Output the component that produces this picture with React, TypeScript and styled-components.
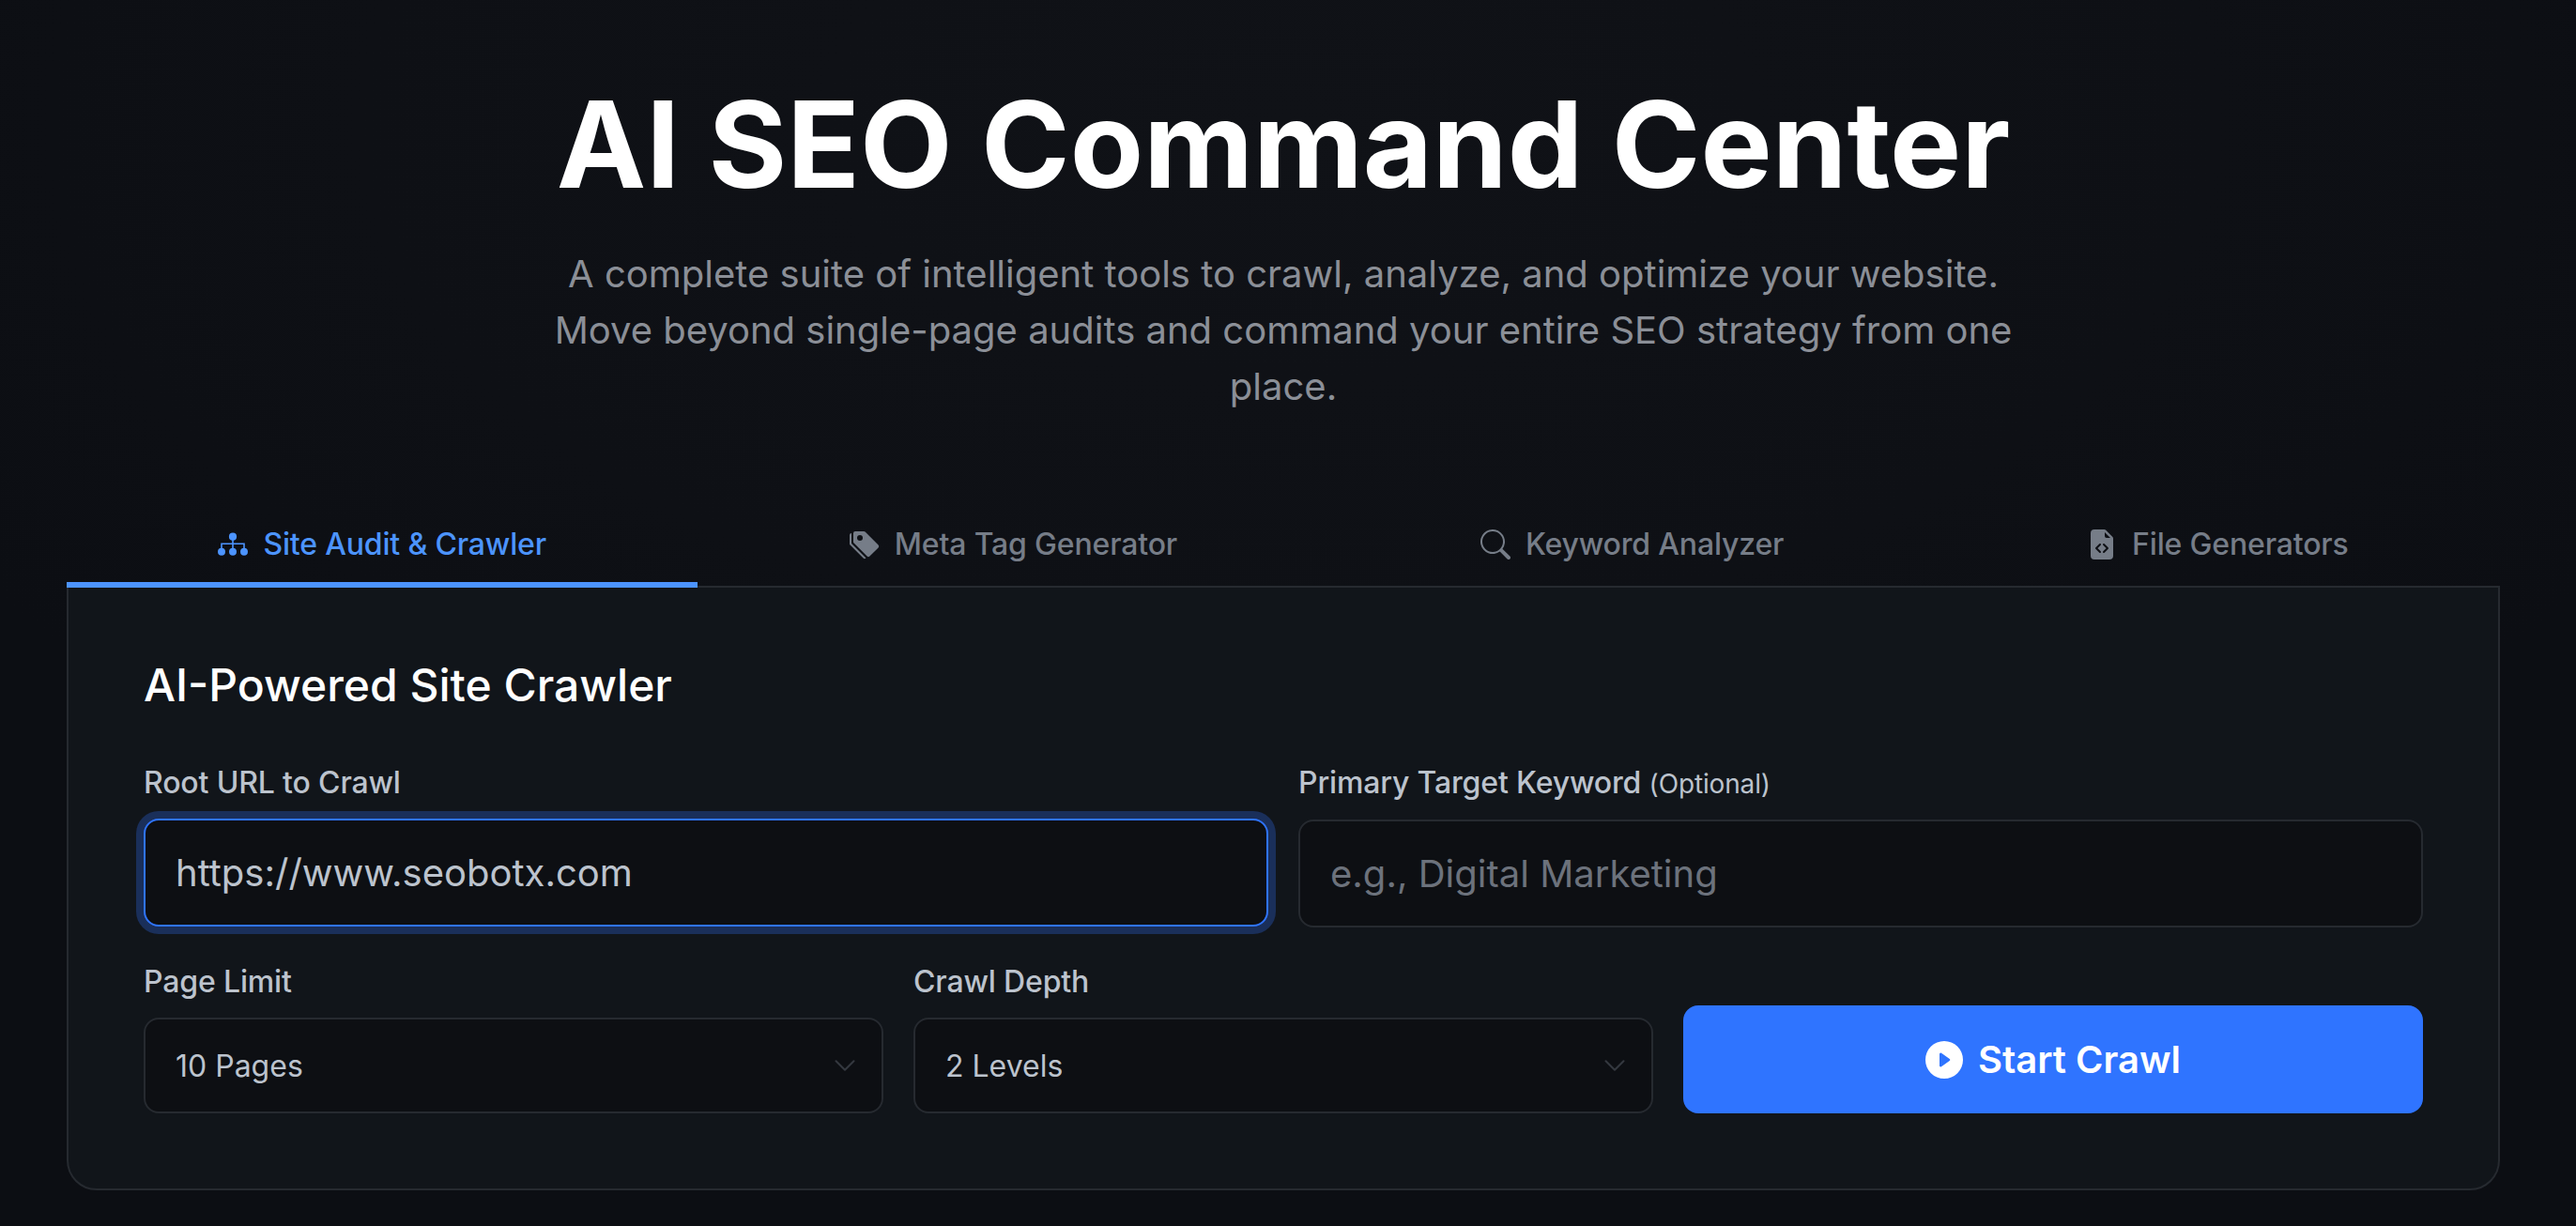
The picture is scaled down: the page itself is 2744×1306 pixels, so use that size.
import React from "react";
import styled, { createGlobalStyle } from "styled-components";
import { BsTagsFill, BsSearch, BsFileEarmarkCodeFill, BsPlayCircleFill } from "react-icons/bs";
import { LuChevronDown } from "react-icons/lu";

const Global = createGlobalStyle`
  html, body { margin: 0; padding: 0; background: #0d0f14; }
  * { box-sizing: border-box; }
  body { font-family: Inter, "Liberation Sans", sans-serif; }
`;

const Page = styled.div`
  width: 2744px;
  min-height: 1306px;
  padding: 82px 10px 0 0;
  display: flex;
  flex-direction: column;
  align-items: center;
  background: radial-gradient(ellipse 60% 70% at 50% 10%, #101217 0%, #0e1015 60%, #0c0e13 100%);
`;

const Main = styled.main`
  width: 2592px;
  display: flex;
  flex-direction: column;
`;

const Hero = styled.header`
  display: flex;
  flex-direction: column;
  align-items: center;
  text-align: center;
  margin-bottom: 98px;
`;

const Title = styled.h1`
  margin: 0 0 36px;
  font-size: 128px;
  line-height: 144px;
  font-weight: 700;
  color: #ffffff;
`;

const Subtitle = styled.p`
  margin: 0;
  width: 1600px;
  font-size: 40px;
  line-height: 60px;
  font-weight: 400;
  color: #8b8f97;
`;

const TabBar = styled.nav`
  display: flex;
  position: relative;
  z-index: 1;
  margin-bottom: -2px;
`;

const Tab = styled.button<{ $active?: boolean }>`
  flex: 1 1 auto;
  display: flex;
  align-items: center;
  justify-content: center;
  gap: 16px;
  height: 86px;
  padding: 0 32px;
  background: none;
  border: 0;
  border-bottom: 6px solid ${(p) => (p.$active ? "#4c94ff" : "transparent")};
  font: 450 32px/40px Inter, sans-serif;
  letter-spacing: -0.17px;
  color: ${(p) => (p.$active ? "#4c94ff" : "#767d88")};
`;

const Panel = styled.section`
  background: #11151a;
  border: 2px solid #262a30;
  border-radius: 0 0 32px 32px;
  padding: 78px 80px 80px;
  display: flex;
  flex-direction: column;
`;

const PanelTitle = styled.h2`
  margin: 0 0 58px;
  font-size: 48px;
  line-height: 52px;
  font-weight: 500;
  color: #ffffff;
`;

const TopRow = styled.div`
  display: grid;
  grid-template-columns: 1fr 1fr;
  gap: 32px;
  margin-bottom: 38px;
`;

const BottomRow = styled.div`
  display: grid;
  grid-template-columns: repeat(3, 1fr);
  gap: 32px;
  align-items: end;
`;

const Field = styled.div`
  display: flex;
  flex-direction: column;
  gap: 18px;
`;

const Label = styled.label`
  font-size: 32px;
  line-height: 40px;
  font-weight: 450;
  letter-spacing: -0.15px;
  color: #bcc3cd;
`;

const Optional = styled.span`
  font-size: 28px;
  font-weight: 400;
`;

const Input = styled.input<{ $focused?: boolean }>`
  height: 115px;
  width: 100%;
  padding: 0 32px;
  background: #0d0f13;
  border: 2px solid ${(p) => (p.$focused ? "#2f74ff" : "#262a30")};
  border-radius: 16px;
  font: 400 40px Inter, sans-serif;
  color: #bcc3cd;
  outline: none;
  box-shadow: ${(p) => (p.$focused ? "0 0 0 8px #1a2f5a" : "none")};
  &::placeholder { color: #6c727c; opacity: 1; }
`;

const SelectWrap = styled.div`
  position: relative;
  height: 102px;
`;

const Select = styled.select`
  appearance: none;
  height: 100%;
  width: 100%;
  padding: 0 32px;
  background: #0d0f13;
  border: 2px solid #262a30;
  border-radius: 16px;
  font: 400 32px Inter, sans-serif;
  color: #bcc3cd;
  outline: none;
`;

const Chevron = styled(LuChevronDown)`
  position: absolute;
  right: 22px;
  top: 32px;
  width: 38px;
  height: 38px;
  stroke-width: 1.3;
  color: #34383f;
  pointer-events: none;
`;

const StartButton = styled.button`
  height: 115px;
  display: flex;
  align-items: center;
  justify-content: center;
  gap: 16px;
  background: #2f74ff;
  border: 0;
  border-radius: 16px;
  font: 600 40px Inter, sans-serif;
  color: #ffffff;
`;

const SiteIcon = () => (
  <svg width="32" height="32" viewBox="0 0 32 32" fill="none" aria-hidden>
    <circle cx="16" cy="7.7" r="4.1" fill="currentColor" />
    <circle cx="4" cy="23.7" r="4" fill="currentColor" />
    <circle cx="16" cy="23.7" r="4" fill="currentColor" />
    <circle cx="28" cy="23.7" r="4" fill="currentColor" />
    <path d="M16 10v10M4 20v-4.7h24V20" stroke="currentColor" strokeWidth="1.6" />
  </svg>
);

export default function App() {
  return (
    <Page>
      <Global />
      <Main>
        <Hero>
          <Title>AI SEO Command Center</Title>
          <Subtitle>
            A complete suite of intelligent tools to crawl, analyze, and optimize your website. Move beyond
            single-page audits and command your entire SEO strategy from one place.
          </Subtitle>
        </Hero>
        <TabBar>
          <Tab $active><SiteIcon />Site Audit &amp; Crawler</Tab>
          <Tab><BsTagsFill size={32} />Meta Tag Generator</Tab>
          <Tab><BsSearch size={32} />Keyword Analyzer</Tab>
          <Tab><BsFileEarmarkCodeFill size={32} />File Generators</Tab>
        </TabBar>
        <Panel>
          <PanelTitle>AI-Powered Site Crawler</PanelTitle>
          <TopRow>
            <Field>
              <Label>Root URL to Crawl</Label>
              <Input $focused readOnly value="https://www.seobotx.com" />
            </Field>
            <Field>
              <Label>Primary Target Keyword <Optional>(Optional)</Optional></Label>
              <Input readOnly placeholder="e.g., Digital Marketing" />
            </Field>
          </TopRow>
          <BottomRow>
            <Field>
              <Label>Page Limit</Label>
              <SelectWrap>
                <Select defaultValue="10"><option value="10">10 Pages</option></Select>
                <Chevron />
              </SelectWrap>
            </Field>
            <Field>
              <Label>Crawl Depth</Label>
              <SelectWrap>
                <Select defaultValue="2"><option value="2">2 Levels</option></Select>
                <Chevron />
              </SelectWrap>
            </Field>
            <StartButton><BsPlayCircleFill size={40} />Start Crawl</StartButton>
          </BottomRow>
        </Panel>
      </Main>
    </Page>
  );
}
